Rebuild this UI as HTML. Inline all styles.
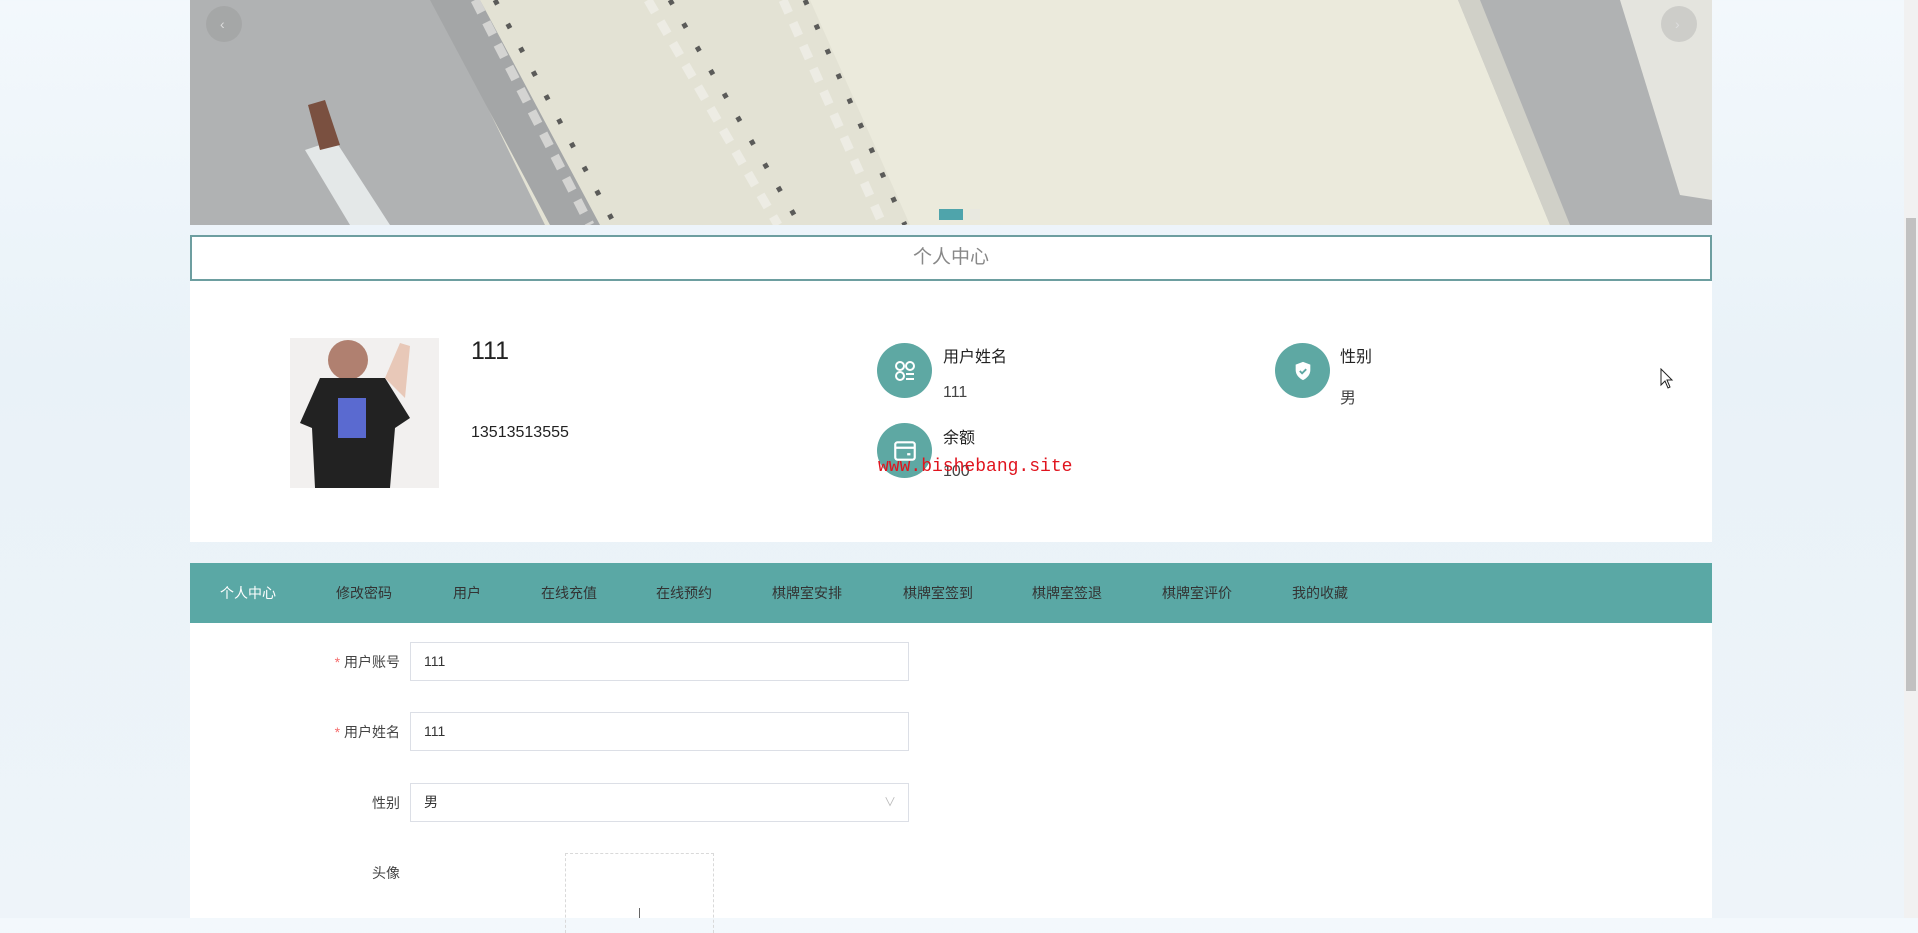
<!DOCTYPE html>
<html><head><meta charset="utf-8"><style>
*{margin:0;padding:0;box-sizing:border-box}
body{width:1918px;height:918px;overflow:hidden;position:relative;font-family:"Liberation Sans","Noto Sans CJK SC",sans-serif;background:linear-gradient(180deg,#f3f8fc 0%,#e9f2f8 40%,#eef4f9 100%);color:#333}
.abs{position:absolute}
.circle{position:absolute;width:55px;height:55px;border-radius:50%;background:#5ea8a3;display:flex;align-items:center;justify-content:center}
.nav span{position:absolute;top:0;line-height:60px;font-size:14px;color:#333}
.lbl{position:absolute;right:1518px;font-size:14px;color:#444;text-align:right}
.inp{position:absolute;left:410px;width:499px;height:39px;border:1px solid #dcdfe6;background:#fff;font-size:14px;padding-left:13px;line-height:37px;color:#333}
</style></head><body>
<svg class="abs" style="left:190px;top:0" width="1522" height="225" viewBox="0 0 1522 225">
<rect width="1522" height="225" fill="#b0b2b3"/>
<polygon points="245,0 1268,0 1360,225 355,225" fill="#e3e2d4"/>
<polygon points="620,0 1268,0 1360,225 720,225" fill="#ebeadc"/>
<polygon points="1268,0 1290,0 1380,225 1360,225" fill="#d0d0c8"/>
<polygon points="240,0 290,0 410,225 360,225" fill="#a4a6a7"/>
<g stroke="#444" stroke-width="5" stroke-dasharray="5 22" opacity="0.85">
<line x1="305" y1="0" x2="425" y2="225"/>
<line x1="480" y1="0" x2="610" y2="225"/>
<line x1="615" y1="0" x2="715" y2="225"/>
</g>
<g stroke="#f4f4f0" stroke-width="9" stroke-dasharray="14 11" opacity="0.6">
<line x1="285" y1="0" x2="400" y2="225"/>
<line x1="458" y1="0" x2="588" y2="225"/>
<line x1="593" y1="0" x2="693" y2="225"/>
</g>
<polygon points="115,150 145,140 200,225 160,225" fill="#e4e8e8"/>
<polygon points="118,105 135,100 150,145 130,150" fill="#7a5040"/>
<polygon points="1430,0 1522,0 1522,200 1490,195" fill="#e4e4de"/>
<circle cx="34" cy="24" r="18" fill="#999" opacity="0.45"/>
<text x="30" y="29" font-size="14" fill="#ddd">‹</text>
<circle cx="1489" cy="24" r="18" fill="#999" opacity="0.3"/>
<text x="1485" y="29" font-size="14" fill="#ddd">›</text>
<rect x="749" y="209" width="24" height="11" fill="#4fa4ab"/>
<rect x="780" y="209" width="10" height="11" fill="#e8e8e0"/>
</svg>
<div class="abs" style="left:190px;top:235px;width:1522px;height:46px;border:2px solid #6d9ea0;background:#fff;text-align:center;line-height:42px;font-size:19px;color:#888">个人中心</div>
<div class="abs" style="left:190px;top:281px;width:1522px;height:261px;background:#fff"></div>
<svg class="abs" style="left:290px;top:338px" width="149" height="150" viewBox="0 0 149 150">
<rect width="149" height="150" fill="#f2f0ef"/>
<circle cx="58" cy="22" r="20" fill="#b08070"/>
<path d="M30 40 L95 40 L120 80 L105 90 L100 150 L25 150 L22 90 L10 85 Z" fill="#222"/>
<rect x="48" y="60" width="28" height="40" fill="#5a6ad0"/>
<path d="M95 40 L110 5 L120 8 L115 60 Z" fill="#e8c8b8"/>
</svg>
<div class="abs" style="left:471px;top:337px;font-size:25px;color:#222">111</div>
<div class="abs" style="left:471px;top:424px;font-size:16px;color:#222">13513513555</div>
<div class="circle" style="left:877px;top:343px"><svg width="24" height="24" viewBox="0 0 24 24" fill="none" stroke="#fff" stroke-width="2"><circle cx="7" cy="7" r="4"/><circle cx="17" cy="7" r="4"/><circle cx="7" cy="17" r="4"/><path d="M13 15h8M13 20h8"/></svg></div>
<div class="abs" style="left:943px;top:343px;font-size:16px;color:#222">用户姓名</div>
<div class="abs" style="left:943px;top:384px;font-size:16px;color:#444">111</div>
<div class="circle" style="left:1275px;top:343px"><svg width="22" height="22" viewBox="0 0 24 24"><path d="M12 2 L20 5 V11 C20 16 16 20 12 22 C8 20 4 16 4 11 V5 Z" fill="#fff"/><path d="M8.5 12 L11 14.5 L15.5 10" stroke="#5ea8a3" stroke-width="2" fill="none"/></svg></div>
<div class="abs" style="left:1340px;top:343px;font-size:16px;color:#222">性别</div>
<div class="abs" style="left:1340px;top:384px;font-size:16px;color:#444">男</div>
<div class="circle" style="left:877px;top:423px"><svg width="26" height="26" viewBox="0 0 24 24" fill="none" stroke="#fff" stroke-width="2"><rect x="3" y="4" width="18" height="16" rx="2"/><path d="M3 9h18M14 15h3"/></svg></div>
<div class="abs" style="left:943px;top:424px;font-size:16px;color:#222">余额</div>
<div class="abs" style="left:943px;top:463px;font-size:16px;color:#444">100</div>
<div class="abs" style="left:878px;top:457px;font-size:18px;color:#e0141e;font-family:'Liberation Mono',monospace">www.bishebang.site</div>
<svg class="abs" style="left:1660px;top:368px" width="16" height="22" viewBox="0 0 16 22"><path d="M1 1 V17 L5 13 L8 20 L10 19 L7 12 L12 12 Z" fill="#fff" stroke="#222" stroke-width="1"/></svg>
<div class="abs nav" style="left:190px;top:563px;width:1522px;height:60px;background:#5aa8a5">
<span style="left:30px;color:#fff">个人中心</span>
<span style="left:146px">修改密码</span>
<span style="left:263px">用户</span>
<span style="left:351px">在线充值</span>
<span style="left:466px">在线预约</span>
<span style="left:582px">棋牌室安排</span>
<span style="left:713px">棋牌室签到</span>
<span style="left:842px">棋牌室签退</span>
<span style="left:972px">棋牌室评价</span>
<span style="left:1102px">我的收藏</span>
</div>
<div class="abs" style="left:190px;top:623px;width:1522px;height:295px;background:#fff"></div>
<div class="lbl" style="top:652px"><span style="color:#f56c6c">* </span>用户账号</div>
<div class="inp" style="top:642px">111</div>
<div class="lbl" style="top:722px"><span style="color:#f56c6c">* </span>用户姓名</div>
<div class="inp" style="top:712px">111</div>
<div class="lbl" style="top:793px">性别</div>
<div class="inp" style="top:783px">男<span style="position:absolute;right:12px;color:#bbb;font-size:12px">∨</span></div>
<div class="lbl" style="top:863px">头像</div>
<div class="abs" style="left:565px;top:853px;width:149px;height:80px;border:1px dashed #d9d9d9;border-bottom:none"></div>
<div class="abs" style="left:639px;top:908px;width:1px;height:10px;background:#666"></div>
<div class="abs" style="left:1904px;top:0;width:14px;height:918px;background:#f1f1f1"></div>
<div class="abs" style="left:1906px;top:218px;width:10px;height:473px;background:#c1c1c1"></div>
</body></html>
